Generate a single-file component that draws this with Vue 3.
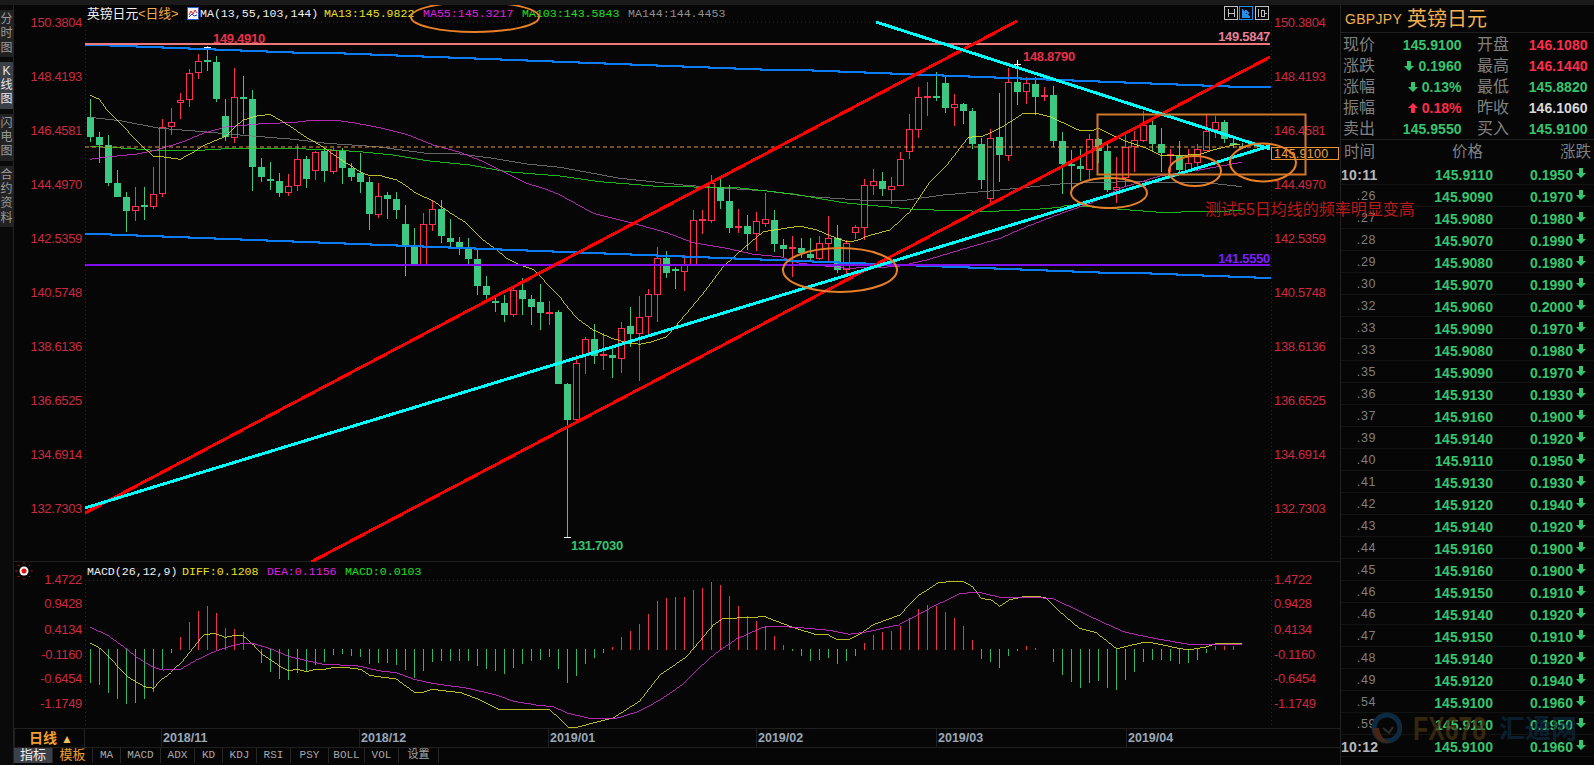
<script setup>
const sideTabs = [
  { text: '分时图', cls: 'tab-a' },
  { text: 'K线图', cls: 'tab-on' },
  { text: '闪电图', cls: 'tab-a' },
  { text: '合约资料', cls: 'tab-a' }
]

// [body top, body bottom, wick top, wick bottom, colour], one per trading day
const candles = [
  [117,137,99,142,'g'],[137,145,132,163,'g'],[145,183,135,186,'g'],[183,197,170,197,'g'],[197,211,192,232,'g'],
  [206,210,187,221,'r'],[206,206,187,220,'g'],[194,206,167,209,'r'],[127,193,119,197,'r'],[122,126,108,135,'r'],
  [100,102,93,119,'r'],[73,99,69,107,'r'],[61,72,54,79,'r'],[61,61,46,71,'g'],[62,99,56,102,'g'],
  [116,137,99,141,'g'],[97,137,68,143,'r'],[98,98,76,134,'g'],[99,167,90,191,'g'],[167,177,158,182,'g'],
  [179,181,162,190,'g'],[181,193,173,197,'g'],[186,192,174,196,'r'],[159,185,144,191,'r'],[159,179,156,188,'g'],
  [152,170,151,180,'r'],[151,171,148,182,'g'],[150,171,148,174,'r'],[151,168,148,184,'g'],[168,177,163,181,'g'],
  [173,182,153,193,'g'],[182,214,177,230,'g'],[196,214,183,218,'r'],[195,199,192,219,'g'],[199,210,192,219,'g'],
  [224,245,205,276,'g'],[246,264,228,266,'g'],[224,264,213,265,'r'],[209,224,201,231,'r'],[209,236,200,243,'g'],
  [238,242,219,248,'g'],[242,248,237,255,'g'],[249,259,238,264,'g'],[259,286,250,295,'g'],[286,295,276,300,'g'],
  [302,302,295,312,'g'],[303,315,295,322,'g'],[290,314,285,317,'r'],[290,299,278,315,'g'],[299,307,295,325,'g'],
  [302,313,284,330,'g'],[313,313,301,325,'r'],[312,384,310,384,'g'],[384,420,383,537,'g'],[363,419,355,423,'r'],
  [339,354,337,374,'r'],[339,356,324,364,'g'],[355,355,333,370,'r'],[355,358,348,378,'g'],[328,358,322,373,'r'],
  [326,334,307,347,'g'],[317,333,296,381,'r'],[294,316,289,335,'r'],[258,294,247,322,'r'],[258,273,251,278,'g'],
  [270,270,267,289,'g'],[265,271,255,291,'r'],[220,264,210,265,'r'],[220,220,210,234,'r'],[183,220,175,223,'r'],
  [187,201,179,209,'g'],[201,228,185,233,'g'],[227,227,209,233,'r'],[226,234,215,250,'g'],[221,233,212,251,'r'],
  [219,223,193,227,'r'],[220,244,210,252,'g'],[245,249,239,257,'g'],[248,248,236,277,'r'],[248,253,238,258,'g'],
  [254,258,238,260,'g'],[243,258,236,260,'r'],[238,243,216,262,'r'],[238,270,225,273,'g'],[243,269,240,275,'r'],
  [227,232,225,239,'r'],[185,227,179,240,'r'],[181,185,169,195,'r'],[181,189,172,196,'g'],[186,189,177,204,'r'],
  [159,185,152,185,'r'],[129,151,114,159,'r'],[97,129,87,138,'r'],[97,97,82,116,'r'],[97,97,72,101,'g'],
  [83,108,75,113,'g'],[104,107,94,126,'r'],[104,111,103,124,'g'],[111,144,108,149,'g'],[144,180,138,189,'g'],
  [138,198,129,203,'r'],[137,155,93,182,'g'],[82,155,68,161,'r'],[82,92,63,105,'g'],[83,91,77,104,'r'],
  [84,97,77,115,'g'],[96,96,87,101,'r'],[95,141,86,147,'g'],[141,164,132,194,'g'],[165,165,150,192,'g'],
  [166,169,149,181,'g'],[139,169,134,180,'r'],[139,151,138,163,'g'],[151,190,143,192,'g'],[187,189,157,203,'r'],
  [147,177,133,186,'r'],[140,146,131,172,'r'],[125,140,111,142,'r'],[125,144,120,151,'g'],[144,153,128,172,'g'],
  [155,155,149,172,'r'],[156,170,141,173,'g'],[163,170,149,172,'r'],[149,162,144,168,'r'],[131,150,115,151,'r'],
  [122,129,116,138,'r'],[122,139,120,143,'g'],[144,144,136,148,'g'],[147,147,143,149,'g']
]
const candleX = i => 90.5 + 9 * i

// points read off crops of the chart, converted to page pixels
const crop = (ox, oy, sx, sy, list) => list.map(([x, y]) => [ox + x / sx, oy + y / sy])
const toPoints = list => list.map(p => `${p[0].toFixed(1)},${p[1].toFixed(1)}`).join(' ')

const ma13 = toPoints([
  ...crop(60, 30, 3, 3, [[90,195],[118,208],[145,245],[172,272],[200,300],[225,328],[250,352],[280,378],[320,382],[360,388],[395,370],[425,350],[460,334],[495,320],[520,295],[550,270],[590,258],[630,253],[660,270],[700,295],[735,320],[780,345],[830,380],[900,425],[925,436],[965,438],[1010,450],[1035,465],[1065,488],[1120,513],[1170,548],[1220,580],[1270,630],[1310,660],[1340,685],[1385,707],[1420,718],[1460,760],[1500,800]]),
  ...crop(540, 290, 3, 3, [[70,35],[110,85],[160,120],[215,145],[260,158],[300,163],[330,157],[380,140],[410,105],[490,10]]),
  ...crop(560, 60, 3, 3, [[490,620],[545,570],[610,515],[720,498],[770,510],[830,535],[860,545],[890,542],[925,527],[990,510],[1050,455],[1110,365],[1165,310],[1225,232],[1270,228],[1320,205],[1360,180]]),
  ...crop(1000, 60, 3, 3, [[70,160],[110,160],[150,170],[240,212],[275,212],[295,205],[330,222],[380,245],[440,265],[480,285],[530,287],[600,283],[640,270],[700,255],[720,253]])
])
const ma55 = toPoints([
  ...crop(60, 30, 3, 3, [[90,388],[150,380],[230,372],[290,360],[370,335],[430,310],[500,290],[560,285],[620,280],[700,278],[760,270],[820,270],[880,278],[960,293],[1040,313],[1120,345],[1200,367],[1270,395],[1330,425],[1400,460],[1450,475],[1500,495]]),
  ...crop(560, 60, 3, 3, [[100,460],[220,490],[320,518],[400,548],[500,565],[580,583],[660,590],[720,610],[860,625],[1010,620],[1100,600],[1200,570],[1320,535],[1400,500],[1490,465]]),
  ...crop(1040, 90, 3, 3, [[150,340],[240,295],[360,258],[490,238],[605,217]])
])
const ma103 = toPoints([
  ...crop(60, 30, 3, 3, [[90,349],[200,355],[300,362],[400,362],[500,356],[600,354],[780,358],[900,365],[1000,375],[1100,392],[1230,405],[1340,425],[1500,438]]),
  ...crop(560, 60, 3, 3, [[120,365],[280,378],[440,382],[540,384],[700,402],[850,428],[1050,447],[1170,452],[1300,454],[1440,447],[1500,442]]),
  ...crop(1040, 90, 3, 3, [[80,345],[230,357],[360,367],[490,365],[605,362]])
])
const ma144 = toPoints([
  ...crop(60, 30, 3, 3, [[90,262],[180,272],[300,295],[430,305],[540,315],[700,328],[800,340],[950,350],[1100,370],[1200,372],[1300,385],[1400,402],[1500,412]]),
  ...crop(560, 60, 3, 3, [[180,355],[370,375],[500,385],[620,393],[750,410],[900,420],[1040,420],[1150,405],[1300,392],[1500,372]]),
  ...crop(1040, 90, 3, 3, [[100,280],[260,275],[500,278],[605,290]])
])

// the blue channel lines come out in little steps in the original
function stairs(x0, y0, x1, y1, step = 26) {
  const slope = (y1 - y0) / (x1 - x0)
  let d = `M${x0} ${Math.round(y0)}`
  for (let x = x0 + step; x < x1 + step; x += step) {
    const nx = Math.min(x, x1)
    d += `H${nx}V${Math.round(y0 + slope * (nx - x0))}`
  }
  return d
}
const blueTop = stairs(85, 45, 1270, 88)
const blueBottom = stairs(85, 234, 1270, 279)

const priceLabels = ['150.3804','148.4193','146.4581','144.4970','142.5359','140.5748','138.6136','136.6525','134.6914','132.7303']
  .map((text, i) => ({ text, y: 22 + 54 * i }))
const macdLabels = [
  { text: '1.4722', y: 579 }, { text: '0.9428', y: 603 }, { text: '0.4134', y: 629 },
  { text: '-0.1160', y: 654 }, { text: '-0.6454', y: 678 }, { text: '-1.1749', y: 703 }
]

const headerSegs = [
  { text: '英镑日元', x: 87, cls: 'hd-cjk white' },
  { text: '<日线>', x: 138, cls: 'hd-cjk orange' },
  { text: 'MA(13,55,103,144)', x: 200, cls: 'white' },
  { text: 'MA13:145.9822', x: 324, cls: 'yellow' },
  { text: 'MA55:145.3217', x: 423, cls: 'magenta' },
  { text: 'MA103:143.5843', x: 522, cls: 'lime' },
  { text: 'MA144:144.4453', x: 628, cls: 'grey' }
]
const macdSegs = [
  { text: 'MACD(26,12,9)', x: 87, cls: 'white' },
  { text: 'DIFF:0.1208', x: 182, cls: 'yellow' },
  { text: 'DEA:0.1156', x: 267, cls: 'magenta' },
  { text: 'MACD:0.0103', x: 345, cls: 'lime' }
]

// bar ends as crop y values, zero line sits at 297-300
const macdEnds = [
  400,405,428,447,462,458,447,425,358,308,262,216,183,168,190,235,238,245,298,340,365,388,390,368,362,345,335,315,312,318,321,342,340,340,345,360,383,362,335,332,332,332,332,347,358,362,372,353,341,332,330,322,357,398,378,342,325,309,
  291,261,243,222,192,153,144,141,141,120,113,96,105,138,168,198,213,228,258,285,303,318,332,330,323,342,332,317,279,255,246,243,228,205,177,165,168,186,204,228,270,327,336,354,318,303,288,294,297,336,375,396,414,399,393,414,420,390,366,336,330,330,333,342,339,330,309,288,288,288,297
]
const macdBars = macdEnds.map((z, i) => ({
  x: candleX(i),
  y1: z < 297 ? 650 : 649,
  y2: 550 + z / 3,
  up: z < 297
}))
const diffLine = toPoints([
  ...crop(0, 550, 2.8, 3, [[253,280],[280,295],[305,320],[330,350],[355,378],[380,395],[405,410],[430,415],[455,385],[480,365],[510,335],[540,295],[570,255],[600,250],[630,262],[655,257],[680,257],[710,285],[735,315],[780,348],[808,362],[832,358],[858,365],[885,358],[910,358],[935,352],[965,352],[1010,358],[1035,376],[1060,380],[1110,387],[1135,407],[1160,427],[1185,427],[1210,418],[1240,422],[1290,428],[1340,448],[1400,480]]),
  ...crop(500, 550, 2.063, 3, [[20,478],[75,478],[100,478],[140,533],[155,533],[230,505],[290,450],[330,375],[385,320],[440,225],[460,205],[520,203],[545,199],[565,211],[610,235],[650,253],[675,253],[695,268],[720,268],[745,250],[770,224],[825,195],[860,140],[905,97],[955,94],[975,110],[993,145],[1012,150],[1030,170],[1050,150],[1080,140],[1112,140],[1125,143],[1155,185],[1195,235],[1230,248],[1272,296],[1325,278],[1345,278],[1400,295],[1420,300],[1460,290],[1476,281],[1530,281]])
])
const deaLine = toPoints([
  ...crop(0, 550, 2.8, 3, [[253,232],[300,255],[355,297],[380,320],[430,352],[455,360],[505,358],[550,330],[600,305],[640,290],[680,280],[707,280],[760,297],[810,320],[860,332],[905,343],[1000,347],[1060,362],[1110,368],[1160,388],[1210,400],[1310,415],[1390,435]]),
  ...crop(500, 550, 2.063, 3, [[30,455],[75,465],[110,470],[140,490],[185,505],[240,505],[285,485],[330,450],[375,405],[410,355],[445,310],[490,265],[540,232],[565,229],[610,232],[680,241],[720,253],[760,245],[820,225],[860,195],[900,165],[950,130],[985,127],[1030,142],[1075,142],[1140,145],[1190,180],[1240,215],[1290,247],[1350,265],[1420,283],[1460,285],[1480,283],[1530,283]])
])

const dates = [
  { text: '2018/11', x: 162 }, { text: '2018/12', x: 360 }, { text: '2019/01', x: 549 },
  { text: '2019/02', x: 757 }, { text: '2019/03', x: 937 }, { text: '2019/04', x: 1127 }
]
const bottomTabs = [
  { text: '指标', w: 39, cls: 'btab-on' }, { text: '模板', w: 40, cls: 'btab-orange' },
  { text: 'MA', w: 28 }, { text: 'MACD', w: 40 }, { text: 'ADX', w: 34 }, { text: 'KD', w: 28 },
  { text: 'KDJ', w: 34 }, { text: 'RSI', w: 34 }, { text: 'PSY', w: 38 }, { text: 'BOLL', w: 36 },
  { text: 'VOL', w: 34 }, { text: '设置', w: 40 }
]

const quotes = [
  { l1: '现价', v1: '145.9100', c1: 'up-g', l2: '开盘', v2: '146.1080', c2: 'up-r' },
  { l1: '涨跌', v1: '0.1960', c1: 'up-g', arrow: 'down', l2: '最高', v2: '146.1440', c2: 'up-r' },
  { l1: '涨幅', v1: '0.13%', c1: 'up-g', arrow: 'down', l2: '最低', v2: '145.8820', c2: 'up-g' },
  { l1: '振幅', v1: '0.18%', c1: 'up-r', arrow: 'up', l2: '昨收', v2: '146.1060', c2: 'val-w' },
  { l1: '卖出', v1: '145.9550', c1: 'up-g', l2: '买入', v2: '145.9100', c2: 'up-g' }
]
const ticks = [
  ['10:11','145.9110','0.1950'],['.26','145.9090','0.1970'],['.27','145.9080','0.1980'],['.28','145.9070','0.1990'],
  ['.29','145.9080','0.1980'],['.30','145.9070','0.1990'],['.32','145.9060','0.2000'],['.33','145.9090','0.1970'],
  ['.33','145.9080','0.1980'],['.35','145.9090','0.1970'],['.36','145.9130','0.1930'],['.37','145.9160','0.1900'],
  ['.39','145.9140','0.1920'],['.40','145.9110','0.1950'],['.41','145.9130','0.1930'],['.42','145.9120','0.1940'],
  ['.43','145.9140','0.1920'],['.44','145.9160','0.1900'],['.45','145.9160','0.1900'],['.46','145.9150','0.1910'],
  ['.46','145.9140','0.1920'],['.47','145.9150','0.1910'],['.48','145.9140','0.1920'],['.49','145.9120','0.1940'],
  ['.54','145.9100','0.1960'],['.59','145.9110','0.1950'],['10:12','145.9100','0.1960']
].map(([time, price, change]) => ({ time, price, change, full: time.includes(':') }))
</script>

<template>
  <div class="app">
    <div class="top-strip"></div>
    <div class="workspace">
      <nav class="side">
        <div v-for="t in sideTabs" :key="t.text" class="side-tab" :class="t.cls">
          <span v-for="ch in t.text" :key="ch" class="side-char">{{ ch }}</span>
        </div>
      </nav>

      <section class="center">
        <svg class="chart" viewBox="14 5 1326 557" width="1326" height="557">
          <line x1="85" y1="22" x2="1270" y2="22" class="grid" />
          <line x1="85.5" y1="22" x2="85.5" y2="562" class="grid" />
          <line x1="1271.5" y1="22" x2="1271.5" y2="562" class="grid" />
          <line x1="14" y1="561.5" x2="1340" y2="561.5" class="rule" />

          <g class="axis">
            <text v-for="l in priceLabels" :key="l.text" x="82" :y="l.y" text-anchor="end">{{ l.text }}</text>
            <text v-for="l in priceLabels" :key="'r' + l.text" x="1274" :y="l.y">{{ l.text }}</text>
          </g>

          <g class="head">
            <text v-for="s in headerSegs" :key="s.text" :x="s.x" y="13" :class="s.cls">{{ s.text }}</text>
          </g>
          <g>
            <rect x="187.5" y="7.5" width="11" height="12" fill="#f4f4f4" stroke="#3060c0" />
            <polyline points="189,15 191,11 193,14 195,10 197,13" fill="none" stroke="#e02020" />
            <polyline points="189,17 192,14 194,16 197,15" fill="none" stroke="#2040d0" />
          </g>

          <!-- candles -->
          <g shape-rendering="crispEdges">
            <g v-for="(c, i) in candles" :key="i">
              <line :x1="candleX(i)" :x2="candleX(i)" :y1="c[2]" :y2="c[3]" :stroke="c[4] === 'r' ? '#ff3050' : '#3cc882'" />
              <line v-if="c[0] === c[1]" :x1="candleX(i) - 3.5" :x2="candleX(i) + 3.5" :y1="c[0]" :y2="c[0]" stroke-width="2" :stroke="c[4] === 'r' ? '#ff3050' : '#3cc882'" />
              <rect v-else-if="c[4] === 'r'" :x="candleX(i) - 3" :y="c[0] + 0.5" width="6" :height="c[1] - c[0]" fill="#060606" stroke="#ff3050" />
              <rect v-else :x="candleX(i) - 3.5" :y="c[0]" width="7" :height="c[1] - c[0]" fill="#3cc882" />
            </g>
          </g>

          <!-- moving averages -->
          <g fill="none" shape-rendering="crispEdges" stroke-width="0.8">
            <polyline :points="ma144" stroke="#808080" />
            <polyline :points="ma103" stroke="#20e020" />
            <polyline :points="ma55" stroke="#d830d8" />
            <polyline :points="ma13" stroke="#e8e830" />
          </g>

          <!-- hand drawn trend lines -->
          <line x1="85" y1="147" x2="1270" y2="147" stroke="#ea9632" stroke-dasharray="4 3" />
          <g fill="none" shape-rendering="crispEdges">
            <path :d="blueTop" stroke="#0a7df5" stroke-width="2" />
            <path :d="blueBottom" stroke="#0a7df5" stroke-width="2" />
            <line x1="85" y1="44" x2="1270" y2="44" stroke="#f07878" stroke-width="2" />
            <line x1="85" y1="265" x2="1270" y2="265" stroke="#8010f0" stroke-width="2" />
            <line x1="85" y1="513" x2="1017" y2="21" stroke="#ff0000" stroke-width="3" />
            <line x1="311" y1="562" x2="1270" y2="57" stroke="#ff0000" stroke-width="3" />
            <line x1="85" y1="508" x2="1270" y2="146" stroke="#00ffff" stroke-width="3" />
            <line x1="876" y1="22" x2="1270" y2="149" stroke="#00ffff" stroke-width="3" />
          </g>

          <g stroke="#ffffff" shape-rendering="crispEdges">
            <line x1="204" y1="47" x2="211" y2="47" />
            <line x1="1013.5" y1="64" x2="1020.5" y2="64" />
            <line x1="1017" y1="60" x2="1017" y2="68" />
            <line x1="564" y1="537" x2="571" y2="537" />
          </g>

          <text x="213" y="38" class="mark red">149.4910</text>
          <text x="1023" y="56" class="mark red">148.8790</text>
          <text x="571" y="545" class="mark green">131.7030</text>
          <text x="1270" y="36" class="mark pink" text-anchor="end">149.5847</text>
          <text x="1270" y="258" class="mark purple" text-anchor="end">141.5550</text>

          <rect x="1271.5" y="147.5" width="67" height="12" fill="#060606" stroke="#ea9632" />
          <text x="1274" y="154" class="price-box">145.9100</text>

          <g fill="none" stroke="#e8802a" stroke-width="2">
            <rect x="1097.5" y="114.5" width="208" height="60" stroke="#d07828" />
            <ellipse cx="475" cy="17" rx="64" ry="15" />
            <ellipse cx="840" cy="270" rx="57" ry="22" />
            <ellipse cx="1109" cy="193" rx="38" ry="15" />
            <ellipse cx="1195" cy="171" rx="26" ry="15" />
            <ellipse cx="1263" cy="162.5" rx="33" ry="19" />
          </g>

          <!-- scale buttons -->
          <g fill="none" stroke="#c0c0c0" shape-rendering="crispEdges">
            <rect x="1224.5" y="6.5" width="13" height="13" />
            <path d="M1228 9v8M1234 9v8M1228 13h6" />
            <rect x="1239.5" y="6.5" width="13" height="13" stroke="#2090f0" />
            <path d="M1242 9v8h8M1245 10l4 3-4 3z" stroke="#2090f0" fill="#2090f0" />
            <rect x="1255.5" y="6.5" width="13" height="13" />
            <path d="M1258 9v8M1261 10h3v6h-3zM1264 13h3" />
          </g>
        </svg>

        <svg class="macd" viewBox="14 562 1326 166" width="1326" height="166">
          <line x1="85" y1="580.5" x2="1270" y2="580.5" class="grid" />
          <line x1="85.5" y1="580" x2="85.5" y2="728" class="grid" />
          <line x1="1271.5" y1="580" x2="1271.5" y2="728" class="grid" />
          <g class="axis">
            <text v-for="l in macdLabels" :key="l.text" x="82" :y="l.y" text-anchor="end">{{ l.text }}</text>
            <text v-for="l in macdLabels" :key="'r' + l.text" x="1274" :y="l.y">{{ l.text }}</text>
          </g>
          <g class="head">
            <text v-for="s in macdSegs" :key="s.text" :x="s.x" y="571" :class="s.cls">{{ s.text }}</text>
          </g>
          <g>
            <circle cx="24" cy="571" r="4.5" fill="#f4f4f4" />
            <circle cx="24" cy="571" r="2.5" fill="#e01010" />
            <path d="M24 564v-1.5M24 578v1.5M17 571h-1.5M31 571h1.5M19 566l-1-1M29 566l1-1M19 576l-1 1M29 576l1 1" stroke="#e01010" />
          </g>
          <g shape-rendering="crispEdges">
            <line v-for="(b, i) in macdBars" :key="i" :x1="b.x" :x2="b.x" :y1="b.y1" :y2="b.y2" :stroke="b.up ? '#f03050' : '#2fb56e'" />
          </g>
          <g fill="none" shape-rendering="crispEdges" stroke-width="0.8">
            <polyline :points="diffLine" stroke="#e8e830" />
            <polyline :points="deaLine" stroke="#e030e0" />
          </g>
        </svg>

        <div class="xaxis">
          <div class="period">日线 <span class="caret">▲</span></div>
          <svg viewBox="86 728 1254 20" width="1254" height="20" class="dates">
            <g v-for="d in dates" :key="d.text">
              <line :x1="d.x + 0.5" :x2="d.x + 0.5" y1="728" y2="748" class="rule" />
              <text :x="d.x + 2" y="736.5">{{ d.text }}</text>
            </g>
          </svg>
        </div>

        <div class="bottom-tabs">
          <div v-for="t in bottomTabs" :key="t.text" class="btab" :class="t.cls" :style="{ width: t.w + 'px' }">{{ t.text }}</div>
        </div>
      </section>

      <aside class="panel">
        <header class="symbol">
          <span class="code">GBPJPY</span>
          <span class="name">英镑日元</span>
        </header>
        <div class="quote">
          <div v-for="q in quotes" :key="q.l1" class="quote-row">
            <span class="lbl">{{ q.l1 }}</span>
            <span class="val" :class="q.c1">
              <svg v-if="q.arrow" viewBox="0 0 10 10" width="10" height="10" class="arrow">
                <path v-if="q.arrow === 'down'" d="M3 0h4v5h3L5 10 0 5h3z" fill="#36c46e" />
                <path v-else d="M3 10h4V5h3L5 0 0 5h3z" fill="#ff2d4a" />
              </svg>
              {{ q.v1 }}
            </span>
            <span class="lbl lbl2">{{ q.l2 }}</span>
            <span class="val" :class="q.c2">{{ q.v2 }}</span>
          </div>
        </div>
        <div class="ticks-head">
          <span>时间</span>
          <span>价格</span>
          <span>涨跌</span>
        </div>
        <div v-for="(t, i) in ticks" :key="i" class="tick">
          <span :class="t.full ? 'time-full' : 'time-sec'">{{ t.time }}</span>
          <span class="val up-g">{{ t.price }}</span>
          <span class="val up-g">{{ t.change }}</span>
          <svg viewBox="0 0 10 10" width="10" height="10" class="tick-arrow">
            <path d="M3 0h4v5h3L5 10 0 5h3z" fill="#36c46e" />
          </svg>
        </div>
        <div class="watermark">
          <svg viewBox="0 0 32 34" width="32" height="34">
            <circle cx="17" cy="16" r="13" fill="none" stroke="#0e2a40" stroke-width="5" />
            <path d="M3 16c0 10 8 16 18 15-6-2-11-7-12-15z" fill="#4a2412" />
            <path d="M13 16l6 5 4-6" fill="none" stroke="#2e2e2e" stroke-width="2" />
          </svg>
          <span class="wm-fx">FX678</span>
          <span class="wm-cn">汇通网</span>
        </div>
      </aside>

      <div class="note">测试55日均线的频率明显变高</div>
    </div>
  </div>
</template>

<style scoped>
.app {
  width: 1594px;
  height: 765px;
  background: #060606;
  display: flex;
  flex-direction: column;
  overflow: hidden;
  font-family: "Liberation Sans", "Noto Sans CJK SC", sans-serif;
}
.top-strip {
  height: 5px;
  background: #1a1a1a;
  flex: none;
}
.workspace {
  flex: 1;
  display: flex;
  position: relative;
  min-height: 0;
}
.side {
  width: 14px;
  flex: none;
  box-sizing: border-box;
  border-right: 1px solid #232323;
  padding-top: 5px;
  display: flex;
  flex-direction: column;
  gap: 5px;
  background: #0a0a0a;
}
.side-tab {
  width: 13px;
  padding: 2px 0;
  color: #9a9a9a;
  background: #222222;
}
.side-char {
  display: block;
  font-size: 12px;
  line-height: 14.3px;
  text-align: center;
}
.side-tab.tab-on {
  background: #3b3f48;
  color: #e8e8e8;
}
.center {
  width: 1326px;
  flex: none;
  display: flex;
  flex-direction: column;
}
.chart, .macd {
  display: block;
  flex: none;
}
.grid {
  stroke: #2a2a2a;
  stroke-dasharray: 1 3;
}
.rule {
  stroke: #1f1f1f;
}
.axis text {
  font-size: 13px;
  letter-spacing: -0.35px;
  fill: #cc2a40;
  dominant-baseline: central;
}
.head text {
  font-family: "Liberation Mono", "Noto Sans CJK SC", monospace;
  font-size: 11.6px;
  dominant-baseline: central;
}
.head text.hd-cjk {
  font-family: "Liberation Sans", "Noto Sans CJK SC", sans-serif;
  font-size: 12.8px;
}
.white { fill: #f0f0f0; }
.orange { fill: #f0b050; }
.yellow { fill: #e8e020; }
.magenta { fill: #e020e0; }
.lime { fill: #20e020; }
.grey { fill: #909090; }
.mark {
  font-size: 13px;
  font-weight: 700;
  letter-spacing: -0.3px;
  dominant-baseline: central;
}
.mark.red { fill: #e8304a; }
.mark.green { fill: #36c46e; }
.mark.pink { fill: #e88098; }
.mark.purple { fill: #7a20ff; }
.price-box {
  font-size: 12.5px;
  fill: #e8a040;
  dominant-baseline: central;
  letter-spacing: 0.3px;
}
.xaxis {
  height: 20px;
  flex: none;
  display: flex;
  border-top: 1px solid #1f1f1f;
  border-bottom: 1px solid #1f1f1f;
  box-sizing: border-box;
}
.period {
  width: 71px;
  flex: none;
  box-sizing: border-box;
  padding-left: 14px;
  border-left: 1px solid #222222;
  border-right: 1px solid #222222;
  color: #f0a030;
  font-size: 14px;
  font-weight: 700;
  line-height: 18px;
}
.caret {
  font-size: 12px;
  color: #f0c060;
}
.dates {
  flex: none;
  display: block;
}
.dates text {
  font-size: 12.5px;
  font-weight: 700;
  fill: #9aa7b8;
  dominant-baseline: central;
}
.bottom-tabs {
  height: 15px;
  flex: none;
  display: flex;
  background: #060606;
}
.btab {
  flex: none;
  box-sizing: border-box;
  text-align: center;
  font-family: "Liberation Mono", "Noto Sans CJK SC", monospace;
  font-size: 11px;
  line-height: 15px;
  color: #a8a8a8;
  border-right: 1px solid #262626;
}
.btab-on {
  background: #3c4048;
  color: #f0f0f0;
  font-size: 13px;
}
.btab-orange {
  color: #f0a030;
  font-size: 13px;
}
.panel {
  width: 254px;
  flex: none;
  box-sizing: border-box;
  border-left: 1px solid #222222;
  position: relative;
  overflow: hidden;
}
.symbol {
  height: 28px;
  box-sizing: border-box;
  border-bottom: 1px solid #1f1f1f;
  display: flex;
  align-items: center;
  padding-left: 4px;
  gap: 5px;
  color: #f0b050;
}
.code {
  font-size: 14px;
  letter-spacing: 0.3px;
}
.name {
  font-size: 20px;
  line-height: 1;
}
.quote {
  height: 107px;
  box-sizing: border-box;
  border-bottom: 1px solid #1f1f1f;
  padding: 1.5px 0 0 2px;
}
.quote-row {
  display: grid;
  grid-template-columns: 32px 86.6px 47.4px 78.6px;
  height: 21px;
  align-items: center;
  font-size: 14px;
}
.lbl {
  font-size: 16px;
  line-height: 1;
  color: #808080;
  white-space: nowrap;
}
.lbl2 {
  padding-left: 15.4px;
}
.val {
  text-align: right;
  font-size: 14px;
  line-height: 1;
  font-weight: 700;
  letter-spacing: 0.05px;
}
.quote-row .val {
  display: flex;
  justify-content: flex-end;
  align-items: center;
  gap: 4px;
}
.up-g { color: #36c46e; }
.up-r { color: #ff2d4a; }
.val-w { color: #d8d8d8; }
.ticks-head {
  height: 23px;
  display: grid;
  grid-template-columns: 35px 1fr 35px;
  align-items: center;
  padding: 0 1px 0 1px;
  font-size: 15.5px;
  line-height: 1;
  color: #808080;
  text-align: center;
  white-space: nowrap;
}
.tick {
  height: 22px;
  box-sizing: border-box;
  padding-top: 2px;
  border-bottom: 1px solid #131313;
  display: grid;
  grid-template-columns: 35px 117px 80px 21px;
  align-items: center;
}
.time-full {
  font-size: 14px;
  font-weight: 700;
  color: #b8b8b8;
  text-align: right;
  letter-spacing: 0.3px;
}
.time-sec {
  font-size: 12.5px;
  color: #808080;
  text-align: right;
  margin-bottom: 2px;
  letter-spacing: 0.6px;
}
.tick-arrow {
  margin: 0 0 4px 3px;
}
.watermark {
  position: absolute;
  left: 29px;
  top: 704px;
  display: flex;
  align-items: center;
  gap: 11px;
  pointer-events: none;
}
.wm-fx {
  width: 75px;
  font-size: 34px;
  font-weight: 700;
  color: #4a3512;
  opacity: 0.7;
  transform: scaleX(0.73);
  transform-origin: left center;
}
.wm-cn {
  font-size: 26px;
  font-weight: 700;
  color: #0c2a40;
  opacity: 0.7;
  line-height: 1;
}
.note {
  position: absolute;
  left: 1205px;
  top: 195px;
  font-size: 16px;
  line-height: 20px;
  color: #bb1a1a;
  white-space: nowrap;
  z-index: 3;
}
</style>
